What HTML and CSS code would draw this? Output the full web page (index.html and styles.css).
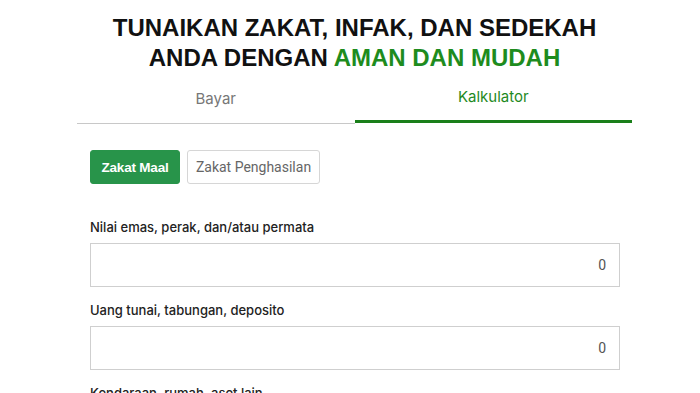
FILE: index.html
```html
<!DOCTYPE html>
<html lang="id">
<head>
<meta charset="utf-8">
<title>Kalkulator Zakat</title>
<link rel="stylesheet" href="styles.css">
</head>
<body>
<main class="wrap">
  <h1 class="title">TUNAIKAN ZAKAT, INFAK, DAN SEDEKAH<br>ANDA DENGAN <span class="accent">AMAN DAN MUDAH</span></h1>
  <nav class="tabs">
    <div class="tab">Bayar</div>
    <div class="tab active">Kalkulator</div>
  </nav>
  <section class="form">
    <div class="switch">
      <button class="btn btn-on">Zakat Maal</button>
      <button class="btn btn-off">Zakat Penghasilan</button>
    </div>
    <div class="field">
      <label class="label">Nilai emas, perak, dan/atau permata</label>
      <div class="input">0</div>
    </div>
    <div class="field">
      <label class="label">Uang tunai, tabungan, deposito</label>
      <div class="input">0</div>
    </div>
    <div class="field">
      <label class="label">Kendaraan, rumah, aset lain</label>
      <div class="input">0</div>
    </div>
  </section>
</main>
</body>
</html>
```
FILE: styles.css
```css
html, body { margin: 0; padding: 0; background: #fff; }
body { font-family: "Inter", "Roboto", "Liberation Sans", sans-serif; color: #222; }
.wrap { width: 555px; margin-left: 77px; }
.title {
  margin: 0; padding-top: 13px;
  font-family: "Liberation Sans", Arial, sans-serif;
  font-weight: 700; font-size: 24px; line-height: 30px;
  text-align: center; color: #111;
}
.accent { color: #1e8c1e; }
.tabs { display: flex; margin-top: 13px; }
.tab {
  flex: 1; text-align: center; font-size: 15px; line-height: 20px;
  color: #777; padding-top: 3px; box-sizing: border-box;
  border-bottom: 1px solid #c8c8c8; height: 38px;
}
.tab.active { color: #1f8a1f; border-bottom: 3px solid #1a7f1a; padding-top: 1px; height: 37px; }
.form { padding: 26px 12px 0 13px; }
.switch { display: flex; gap: 7px; }
.btn {
  height: 34px; border-radius: 3px; font-size: 13px; padding: 0;
  font-family: "Liberation Sans", Arial, sans-serif; cursor: pointer;
}
.btn-on { width: 90px; background: #28944a; border: 1px solid #28944a; color: #fff; font-weight: 700; letter-spacing: -0.2px; font-size: 13.5px; }
.btn-off { width: 133px; background: #fff; border: 1px solid #d6d6d6; color: #666; font-family: "Roboto", "Liberation Sans", sans-serif; font-size: 14px; }
.field { display: flex; flex-direction: column; margin-top: 35px; }
.field + .field { margin-top: 15px; }
.label { font-family: "Inter", "Roboto", "Liberation Sans", sans-serif; font-weight: 500; font-size: 13px; line-height: 16px; color: #222; margin-bottom: 8px; }
.input {
  height: 44px; box-sizing: border-box; border: 1px solid #cfcfcf;
  display: flex; align-items: center; justify-content: flex-end;
  padding-right: 13px; font-family: "Roboto", "Liberation Sans", sans-serif;
  font-size: 14px; color: #555;
}
```
